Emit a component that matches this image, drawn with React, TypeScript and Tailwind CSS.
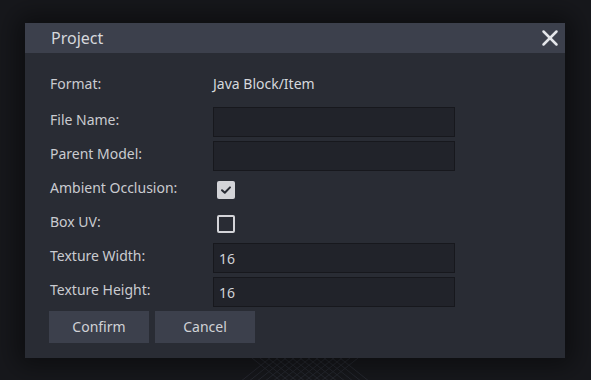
import { X } from "lucide-react";

const Row = ({ label, children }: { label: string; children: React.ReactNode }) => (
  <div className="flex items-center h-[34px]">
    <span className="w-[163px] mb-[6px]">{label}</span>
    {children}
  </div>
);

const Field = ({ value }: { value?: string }) => (
  <div className="w-[242px] h-[30px] bg-[#21232a] border border-[#17181d] px-[5px] flex items-center text-[#d0d2d6]">
    {value}
  </div>
);

export default function App() {
  return (
    <div
      className="w-[591px] h-[380px] bg-[#17181c] relative overflow-hidden text-[14px] text-[#c9cbd0]"
      style={{ fontFamily: '"Noto Sans", sans-serif' }}
    >
      <svg className="absolute left-[230px] top-[350px]" width="150" height="40" viewBox="0 0 150 40">
        <g stroke="#262830" strokeWidth="1">
          {Array.from({ length: 12 }).map((_, i) => (
            <line key={"a" + i} x1={i * 8} y1={40} x2={i * 8 + 40} y2={8} />
          ))}
          {Array.from({ length: 12 }).map((_, i) => (
            <line key={"b" + i} x1={150 - i * 8} y1={40} x2={110 - i * 8} y2={8} />
          ))}
        </g>
      </svg>
      <div className="absolute left-[25px] top-[23px] w-[540px] h-[335px] bg-[#292c34] shadow-[0_0_24px_8px_rgba(0,0,0,0.45)] flex flex-col">
        <div className="h-[30px] bg-[#3c404c] flex items-center justify-between pl-[26px] pr-[2px] shrink-0">
          <span className="text-[16px] text-[#d6d8dc]">Project</span>
          <X className="w-[26px] h-[26px] text-[#e4e6ea]" strokeWidth={2.3} />
        </div>
        <div className="pl-[25px] pt-[17px] flex flex-col">
          <div className="flex items-center h-[26px] mb-[9px]">
            <span className="w-[163px]">Format:</span>
            <span className="text-[#d6d8dc]">Java Block/Item</span>
          </div>
          <Row label="File Name:">
            <Field />
          </Row>
          <Row label="Parent Model:">
            <Field />
          </Row>
          <Row label="Ambient Occlusion:">
            <div className="ml-[4px] w-[18px] h-[18px] rounded-[2px] bg-[#d3d4d8] flex items-center justify-center">
              <svg width="12" height="12" viewBox="0 0 12 12" fill="none">
                <path d="M2 6.2 L4.8 8.8 L10 3.4" stroke="#292c34" strokeWidth="2" strokeLinecap="round" strokeLinejoin="round" />
              </svg>
            </div>
          </Row>
          <Row label="Box UV:">
            <div className="ml-[4px] w-[18px] h-[18px] rounded-[2px] border-2 border-[#d3d4d8]" />
          </Row>
          <Row label="Texture Width:">
            <Field value="16" />
          </Row>
          <Row label="Texture Height:">
            <Field value="16" />
          </Row>
          <div className="flex gap-[6px] mt-[2px] -ml-[1px]">
            <button className="w-[100px] h-[32px] bg-[#3c404c] text-[#d0d2d6] pb-[2px]">Confirm</button>
            <button className="w-[100px] h-[32px] bg-[#3c404c] text-[#d0d2d6] pb-[2px]">Cancel</button>
          </div>
        </div>
      </div>
    </div>
  );
}
